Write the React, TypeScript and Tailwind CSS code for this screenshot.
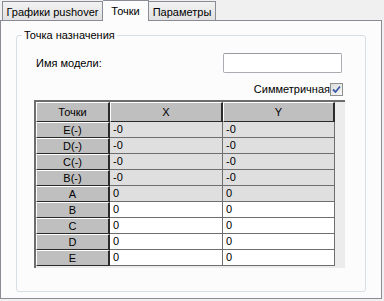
import React from "react";

const FONT = { fontFamily: '"Liberation Sans", Arial, sans-serif' };

interface PointRow {
  name: string;
  x: string;
  y: string;
  shaded: boolean;
}

const ROWS: PointRow[] = [
  { name: "E(-)", x: "-0", y: "-0", shaded: true },
  { name: "D(-)", x: "-0", y: "-0", shaded: true },
  { name: "C(-)", x: "-0", y: "-0", shaded: true },
  { name: "B(-)", x: "-0", y: "-0", shaded: true },
  { name: "A", x: "0", y: "0", shaded: true },
  { name: "B", x: "0", y: "0", shaded: false },
  { name: "C", x: "0", y: "0", shaded: false },
  { name: "D", x: "0", y: "0", shaded: false },
  { name: "E", x: "0", y: "0", shaded: false },
];

function Tab({ label, active, className }: { label: string; active?: boolean; className: string }) {
  if (active) {
    return (
      <div
        className={`relative z-10 -mb-px flex h-[21px] items-start justify-center border border-b-0 border-[#898c95] bg-[#fcfcfc] pt-[2px] ${className}`}
      >
        {label}
      </div>
    );
  }
  return (
    <div
      className={`flex h-[19px] items-start justify-center border border-b-0 border-[#898c95] bg-gradient-to-b from-[#f2f2f2] to-[#e1e1e1] pt-[2px] ${className}`}
    >
      {label}
    </div>
  );
}

function HeaderCell({ children, className }: { children: React.ReactNode; className: string }) {
  return (
    <div
      className={`flex h-full items-center justify-center border-t border-l border-white border-r-2 border-b border-r-[#2a2a2a] border-b-[#2a2a2a] bg-[#bfbfbf] ${className}`}
    >
      {children}
    </div>
  );
}

function Checkbox() {
  return (
    <span className="flex h-[13px] w-[13px] items-center justify-center border border-[#8e8f8f] bg-gradient-to-br from-[#dcdcdc] to-[#f8f8f8]">
      <svg width="9" height="9" viewBox="0 0 9 9">
        <path d="M1 4.5 L3.5 7 L8 1.5" fill="none" stroke="#3b5aa6" strokeWidth="1.8" />
      </svg>
    </span>
  );
}

export default function App() {
  return (
    <div className="h-[301px] w-[384px] overflow-hidden bg-[#f0f0f0] text-[11px] text-black" style={FONT}>
      <div className="flex h-[20px] items-end pl-[2px]">
        <Tab label="Графики pushover" className="w-[101px]" />
        <Tab label="Точки" active className="w-[46px] border-l-0" />
        <Tab label="Параметры" className="w-[67px] border-l-0" />
      </div>

      <div className="h-[279px] w-[382px] border border-[#898c95] bg-[#fcfcfc] pl-[15px] pt-[7px]">
        <fieldset className="h-[264px] w-[350px] rounded-[3px] border border-[#d5dfe5]">
          <legend className="ml-[5px] px-[2px] leading-[14px]">Точка назначения</legend>

          <div className="mt-[11px] flex h-[20px] items-center justify-between pl-[19px] pr-[23px]">
            <span>Имя модели:</span>
            <div className="h-[20px] w-[119px] rounded-[2px] border border-[#abadb3] border-t-[#9a9ca3] bg-white" />
          </div>

          <div className="mt-[10px] flex h-[13px] items-center justify-end pr-[22px]">
            <span className="leading-[13px]">Симметричная</span>
            <Checkbox />
          </div>

          <div className="ml-[17px] mt-[4px] h-[168px] w-[311px] border-t-2 border-l-2 border-[#6d6d6d] bg-[#ececec]">
            <div className="flex h-[20px]">
              <HeaderCell className="w-[74px]">Точки</HeaderCell>
              <HeaderCell className="w-[113px]">X</HeaderCell>
              <HeaderCell className="w-[112px]">Y</HeaderCell>
            </div>
            {ROWS.map((row) => (
              <div key={row.name} className="flex h-[16px]">
                <HeaderCell className="w-[74px]">{row.name}</HeaderCell>
                <div
                  className={`flex h-full w-[113px] items-center border-r border-b border-[#6e6e6e] pl-[3px] ${
                    row.shaded ? "bg-[#dfdfdf]" : "bg-white"
                  }`}
                >
                  {row.x}
                </div>
                <div
                  className={`flex h-full w-[112px] items-center border-r border-b border-[#6e6e6e] pl-[3px] ${
                    row.shaded ? "bg-[#dfdfdf]" : "bg-white"
                  }`}
                >
                  {row.y}
                </div>
              </div>
            ))}
          </div>
        </fieldset>
      </div>
    </div>
  );
}
